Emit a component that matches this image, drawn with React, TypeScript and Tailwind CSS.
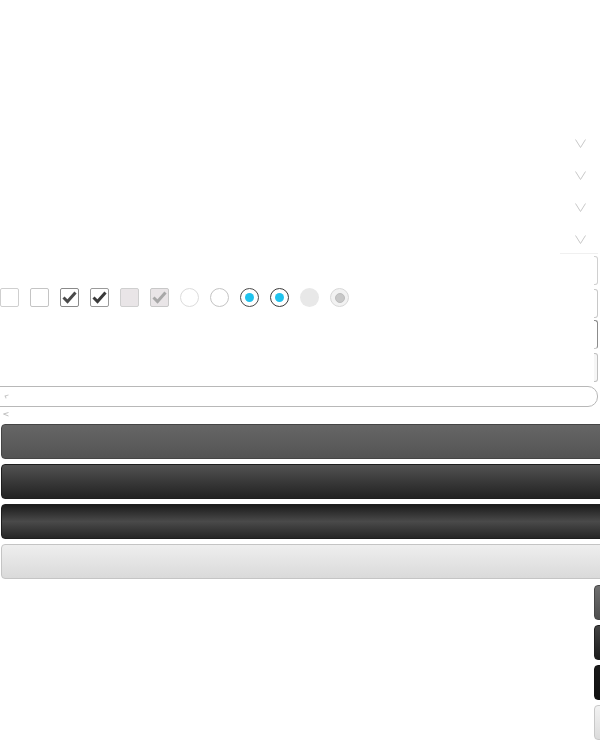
import React from "react";

const Chevron = () => (
  <svg width="11" height="9" viewBox="0 0 11 9" fill="none">
    <path d="M0.5 0.5 L5.5 8.5 L10.5 0.5" stroke="#c8c8c8" strokeWidth="1" />
  </svg>
);

const Check = ({ color }: { color: string }) => (
  <svg width="15" height="13" viewBox="0 0 15 13" fill="none">
    <path d="M1.5 6.5 L5.5 10.5 L13.5 1.5" stroke={color} strokeWidth="3" />
  </svg>
);

export default function App() {
  return (
    <div className="w-[600px] h-[744px] overflow-hidden bg-white relative font-['Liberation_Sans',sans-serif]">
      {/* chevrons */}
      <div className="flex flex-col items-end pt-[139px] pr-[14px]">
        {[0, 1, 2, 3].map((i) => (
          <div key={i} className="h-[32px] flex items-start">
            <Chevron />
          </div>
        ))}
      </div>

      {/* checkboxes/radios + right boxes */}
      <div className="flex justify-between items-start -mt-[14px]">
        <div className="flex gap-[11px] mt-[35px]">
          <div className="w-[19px] h-[19px] border border-[#cfcfcf] rounded-[2px] bg-white" />
          <div className="w-[19px] h-[19px] border border-[#c4c4c4] rounded-[2px] bg-white" />
          <div className="w-[19px] h-[19px] border border-[#8a8a8a] rounded-[2px] bg-white flex items-center justify-center">
            <Check color="#4a4a4a" />
          </div>
          <div className="w-[19px] h-[19px] border border-[#9a9a9a] rounded-[2px] bg-white flex items-center justify-center">
            <Check color="#3a3a3a" />
          </div>
          <div className="w-[19px] h-[19px] border border-[#cfcfcf] rounded-[2px] bg-[#e9e5e7]" />
          <div className="w-[19px] h-[19px] border border-[#c8c8c8] rounded-[2px] bg-[#e9e5e7] flex items-center justify-center">
            <Check color="#a8a8a8" />
          </div>
          <div className="w-[19px] h-[19px] rounded-full border border-[#dcdcdc] bg-white" />
          <div className="w-[19px] h-[19px] rounded-full border border-[#c4c4c4] bg-white" />
          <div className="w-[19px] h-[19px] rounded-full border-[1.5px] border-[#4a4a4a] bg-white flex items-center justify-center">
            <div className="w-[9px] h-[9px] rounded-full bg-[#1fc3ee]" />
          </div>
          <div className="w-[19px] h-[19px] rounded-full border-[1.5px] border-[#3a3a3a] bg-white flex items-center justify-center">
            <div className="w-[9px] h-[9px] rounded-full bg-[#1fc3ee]" />
          </div>
          <div className="w-[19px] h-[19px] rounded-full bg-[#e8e8e8]" />
          <div className="w-[19px] h-[19px] rounded-full border border-[#d8d8d8] bg-[#f2f2f2] flex items-center justify-center">
            <div className="w-[10px] h-[10px] rounded-full bg-[#c8c8c8] border border-[#bdbdbd]" />
          </div>
        </div>
        <div className="flex flex-col items-end gap-[4px] pr-[2px]">
          <div className="flex flex-col items-end">
            <div className="w-[38px] h-px bg-[#f0f0f0]" />
            <div className="w-[4px] h-[29px] mt-[2px] border-r border-t border-b border-[#d0d0d0] rounded-r-[3px]" />
          </div>
          <div className="w-[4px] h-[29px] border-r border-t border-b border-[#c8c8c8] rounded-r-[3px]" />
          <div className="w-[4px] h-[29px] -mt-[2px] border-r-[1.5px] border-t border-b border-[#8c8c8c] border-b-[#c8c8c8] rounded-r-[3px]" />
          <div className="w-[4px] h-[29px] border-r border-t border-b border-[#c0c0c0] bg-[#f6f6f6] rounded-r-[3px]" />
        </div>
      </div>

      {/* text input */}
      <div className="mt-[4px] -ml-[10px] w-[608px] h-[21px] border border-[#b8b8b8] rounded-[10px] flex items-center pl-[14px]">
        <div className="w-[4px] h-[3px] border-t border-l border-[#c4c4c4] rotate-[-20deg]" />
      </div>
      <div className="h-[17px] pl-[3px] pt-[5px]">
        <svg width="6" height="5" viewBox="0 0 6 5" fill="none">
          <path d="M5.5 0.5 L0.5 2 L5.5 4" stroke="#c0c0c0" strokeWidth="1" />
        </svg>
      </div>

      {/* buttons */}
      <div className="flex flex-col gap-[5px] pl-[1px]">
        <div className="w-[620px] h-[35px] rounded-[4px] border border-[#454545] bg-gradient-to-b from-[#666666] to-[#545454]" />
        <div className="w-[620px] h-[35px] rounded-[4px] border border-[#1e1e1e] bg-gradient-to-b from-[#525252] to-[#222222]" />
        <div className="w-[620px] h-[35px] rounded-[4px] border border-[#1e1e1e] bg-gradient-to-b from-[#1c1c1c] via-[#4a4a4a] to-[#262626]" />
        <div className="w-[620px] h-[35px] rounded-[4px] border border-[#c4c4c4] bg-gradient-to-b from-[#eeeeee] to-[#dadada]" />
      </div>

      {/* small buttons at right edge */}
      <div className="flex flex-col items-end gap-[5px] mt-[6px] -mr-[30px]">
        <div className="w-[36px] h-[35px] rounded-[4px] border border-[#454545] bg-gradient-to-b from-[#707070] to-[#4e4e4e]" />
        <div className="w-[36px] h-[35px] rounded-[4px] border border-[#1e1e1e] bg-gradient-to-b from-[#444444] to-[#1c1c1c]" />
        <div className="w-[36px] h-[35px] rounded-[4px] border border-[#111111] bg-gradient-to-b from-[#1a1a1a] to-[#101010]" />
        <div className="w-[36px] h-[35px] rounded-[4px] border border-[#c8c8c8] bg-gradient-to-b from-[#f2f2f2] to-[#dcdcdc]" />
      </div>
    </div>
  );
}
